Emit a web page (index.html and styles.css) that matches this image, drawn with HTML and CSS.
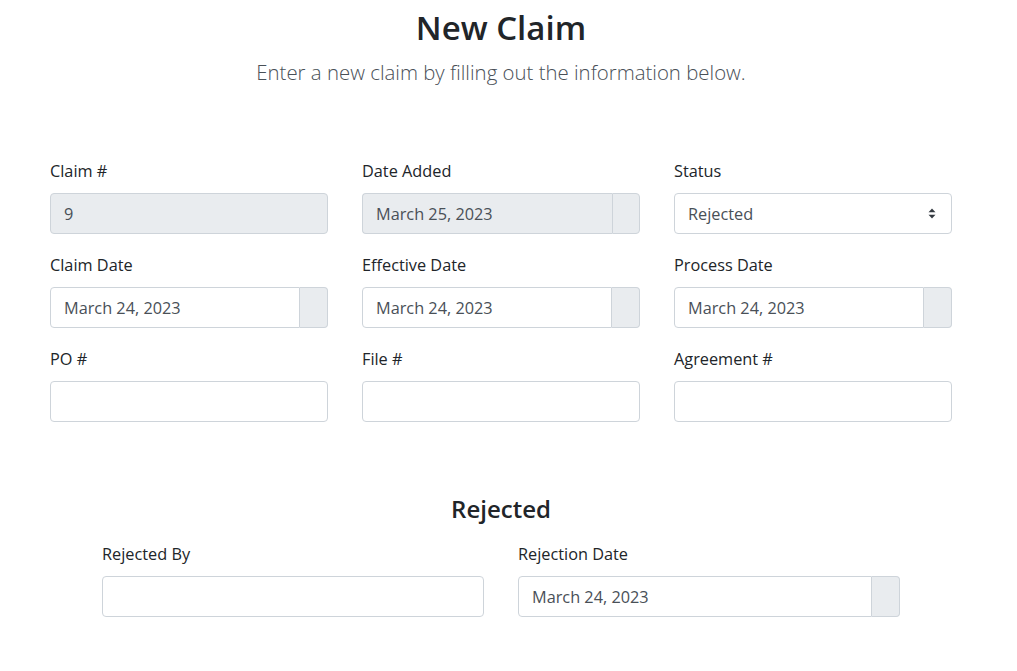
FILE: index.html
```html
<!DOCTYPE html>
<html>
<head>
<meta charset="utf-8">
<link rel="stylesheet" href="styles.css">
</head>
<body>
<div class="page">
  <header class="header">
    <h1 class="title">New Claim</h1>
    <p class="lead">Enter a new claim by filling out the information below.</p>
  </header>

  <div class="grid">
    <div class="field">
      <label class="label">Claim #</label>
      <div class="control disabled">9</div>
    </div>
    <div class="field">
      <label class="label">Date Added</label>
      <div class="group disabled-group">
        <div class="control disabled in-group">March 25, 2023</div>
        <div class="addon addon-disabled"></div>
      </div>
    </div>
    <div class="field">
      <label class="label">Status</label>
      <div class="control select">
        <span>Rejected</span>
        <svg class="caret" width="8" height="11" viewBox="0 0 8 11"><path d="M4 0.5 L7.5 4.2 H0.5 Z" fill="#343a40"/><path d="M4 10.5 L7.5 6.8 H0.5 Z" fill="#343a40"/></svg>
      </div>
    </div>

    <div class="field">
      <label class="label">Claim Date</label>
      <div class="group">
        <div class="control in-group">March 24, 2023</div>
        <div class="addon"></div>
      </div>
    </div>
    <div class="field">
      <label class="label">Effective Date</label>
      <div class="group">
        <div class="control in-group">March 24, 2023</div>
        <div class="addon"></div>
      </div>
    </div>
    <div class="field">
      <label class="label">Process Date</label>
      <div class="group">
        <div class="control in-group">March 24, 2023</div>
        <div class="addon"></div>
      </div>
    </div>

    <div class="field">
      <label class="label">PO #</label>
      <div class="control"></div>
    </div>
    <div class="field">
      <label class="label">File #</label>
      <div class="control"></div>
    </div>
    <div class="field">
      <label class="label">Agreement #</label>
      <div class="control"></div>
    </div>
  </div>

  <section class="section">
    <h2 class="section-title">Rejected</h2>
    <div class="grid2">
      <div class="field">
        <label class="label">Rejected By</label>
        <div class="control"></div>
      </div>
      <div class="field">
        <label class="label">Rejection Date</label>
        <div class="group">
          <div class="control in-group">March 24, 2023</div>
          <div class="addon"></div>
        </div>
      </div>
    </div>
  </section>
</div>
</body>
</html>
```

FILE: styles.css
```css
* { box-sizing: border-box; }
body {
  margin: 0;
  background: #fff;
  font-family: "Open Sans", "Noto Sans", sans-serif;
  color: #212529;
}
.page {
  width: 1002px;
}
.header {
  text-align: center;
  padding-top: 8px;
}
.title {
  margin: 0;
  font-size: 33px;
  line-height: 40px;
  font-weight: 600;
  color: #212529;
}
.lead {
  margin: 11px 0 0;
  font-size: 20.4px;
  line-height: 26px;
  font-weight: 300;
  color: #495057;
}
.grid {
  margin: 75px 0 0 50px;
  width: 902px;
  display: grid;
  grid-template-columns: repeat(3, 278px);
  column-gap: 34px;
  row-gap: 20px;
}
.field {
  display: flex;
  flex-direction: column;
}
.label {
  font-size: 16.3px;
  line-height: 22px;
  margin-bottom: 11px;
  color: #212529;
}
.control {
  height: 41px;
  border: 1px solid #ced4da;
  border-radius: 4px;
  padding: 0 13px;
  display: flex;
  align-items: center;
  font-size: 16.3px;
  color: #495057;
  background: #fff;
}
.control.disabled {
  background: #e9ecef;
}
.select {
  justify-content: space-between;
  padding-right: 15px;
}
.caret { display: block; }
.group {
  display: flex;
  height: 41px;
}
.in-group {
  flex: 1;
  border-radius: 4px 0 0 4px;
}
.addon {
  width: 28px;
  border: 1px solid #ced4da;
  border-left: none;
  border-radius: 0 4px 4px 0;
  background: #e9ecef;
}
.disabled-group .in-group { border-right: none; }
.addon-disabled { border-left: 1px solid #ced4da; }
.section {
  margin-top: 71px;
}
.section-title {
  margin: 0;
  text-align: center;
  font-size: 24px;
  line-height: 32px;
  font-weight: 600;
  color: #212529;
}
.grid2 {
  margin: 18px 0 0 102px;
  width: 798px;
  display: grid;
  grid-template-columns: 382px 382px;
  column-gap: 34px;
}
```
